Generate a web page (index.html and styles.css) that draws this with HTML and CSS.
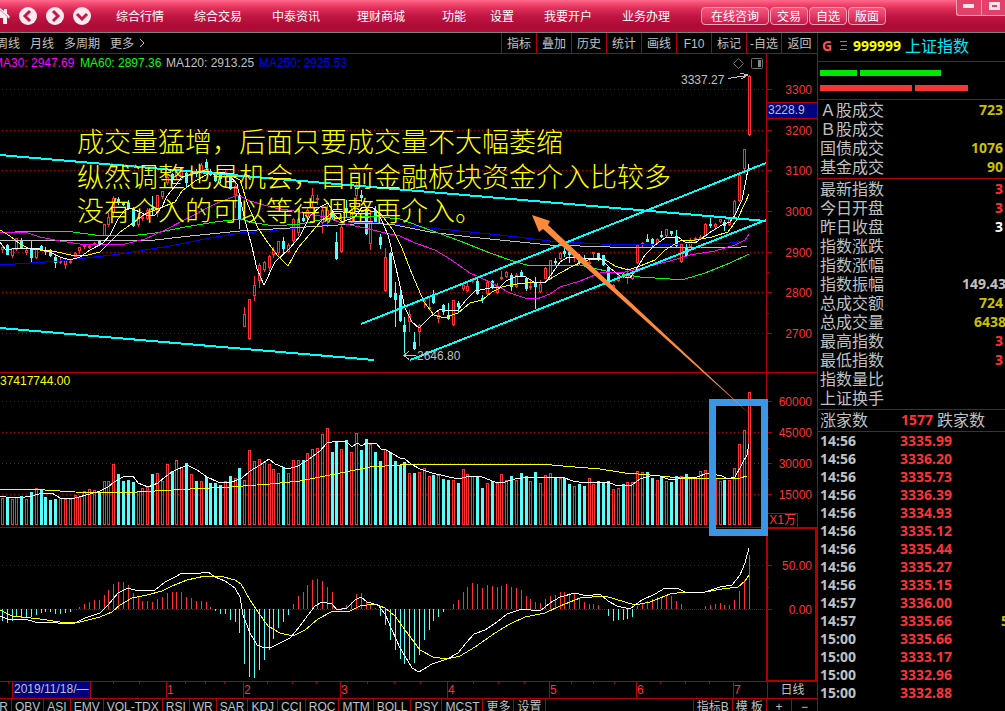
FILE: index.html
```html
<!DOCTYPE html>
<html lang="zh-CN">
<head>
<meta charset="utf-8">
<title>上证指数 999999</title>
<link rel="stylesheet" href="styles.css">
</head>
<body>
<div class="app">
  <header class="topbar">
    <nav class="round-nav">
      <button class="icon-btn home" aria-label="首页"><svg viewBox="0 0 20 20"><path d="M0 9.500 9 2l4 3V3h3v4.500l3 3-1.500 2L16 11v7h-4v-6H7v6H2v-7l-2 1z" fill="#ffeef2"/><path d="m1 10.500 8-6.500 8 7" fill="none" stroke="#f58aa4"/></svg></button>
      <button class="icon-btn" aria-label="后退"><svg viewBox="0 0 20 20"><circle cx="10" cy="10" r="9" fill="#ffe9ee"/><path d="M12 5 7 10l5 5" class="chev"/></svg></button>
      <button class="icon-btn" aria-label="前进"><svg viewBox="0 0 20 20"><circle cx="10" cy="10" r="9" fill="#ffe9ee"/><path d="m8 5 5 5-5 5" class="chev"/></svg></button>
      <button class="icon-btn" aria-label="展开"><svg viewBox="0 0 20 20"><circle cx="10" cy="10" r="9" fill="#ffe9ee"/><path d="m5 8 5 5 5-5" class="chev"/></svg></button>
    </nav>
    <nav class="menu">
      <a href="#">综合行情</a><a href="#">综合交易</a><a href="#">中泰资讯</a><a href="#" class="wide">理财商城</a><a href="#" class="wide">功能</a><a href="#" class="tight">设置</a><a href="#">我要开户</a><a href="#">业务办理</a>
    </nav>
    <div class="actions">
      <button class="long">在线咨询</button><button>交易</button><button>自选</button><button>版面</button>
    </div>
    <div class="window-controls">
      <button aria-label="最小化"><svg viewBox="0 0 24 15"><rect x="6" y="4" width="11" height="4" fill="#ffe4ea"/></svg></button>
      <button aria-label="最大化"><svg viewBox="0 0 24 15"><rect x="8.500" y="3.500" width="8" height="5" fill="none" stroke="#ffe4ea" stroke-width="3"/></svg></button>
    </div>
  </header>

  <main class="workspace">
    <section class="left">
      <div class="toolbar">
        <div class="periods"><button>周线</button><button>月线</button><button>多周期</button><button>更多<svg class="more" viewBox="0 0 6 10"><path d="m1 1 4 4-4 4"/></svg></button></div>
        <div class="tools"><button>指标</button><button>叠加</button><button>历史</button><button>统计</button><button>画线</button><button>F10</button><button>标记</button><button>-自选</button><button>返回</button></div>
      </div>
      <svg class="chart" id="chart" viewBox="0 54 817 627" role="img" aria-label="上证指数日线图">
        <g class="grid">
          <path d="M2 89.500H766M2 130.500H766M2 170.500H766M2 211.500H766M2 252.500H766M2 292.500H766M2 333.500H766M2 401.500H766M2 432.500H766M2 463.500H766M2 494.500H766M2 565.500H766"/>
          <path class="zero" d="M0 609.500H766"/>
        </g>
        <g class="frame">
          <path d="M766.500 54V528M0 372.500H817M0 527.500H766M767 513.500H797.500V527"/>
          <path d="M767 89.500h5M767 130.500h5M767 170.500h5M767 211.500h5M767 252.500h5M767 292.500h5M767 333.500h5M767 401.500h5M767 432.500h5M767 463.500h5M767 494.500h5M767 565.500h5M767 609.500h5M767 150.500h2M767 191.500h2M767 231.500h2M767 272.500h2M767 313.500h2M767 417.500h2M767 448.500h2M767 479.500h2M767 587.500h2"/>
          <rect class="thick" x="767" y="528" width="49" height="153"/>
        </g>
        <g id="candles"></g>
        <g id="volumes"></g>
        <g id="macd"></g>
        <g class="curves">
          <polyline class="blue" points="0,265 60,261 120,254 170,246 210,238 240,233 270,231 330,224 375,222 420,227 470,232 500,235 550,241 600,244 660,245 700,243 730,243 747,241"/>
          <polyline class="gray" points="0,240 60,240 155,240 190,236 240,231 290,228 370,223 395,225 430,232 470,237 500,240 550,245 610,247 700,247 735,248 747,246"/>
          <polyline class="green" points="0,233 30,231 65,231 95,235 130,236 155,233 185,227 215,222 240,219 255,223 275,226 300,224 330,218 370,216 400,219 430,230 460,241 490,253 510,260 530,266 580,265 610,272 640,277 670,279 685,279 705,273 730,263 749,254"/>
          <polyline class="magenta" points="0,232 25,232 40,237 60,241 80,244 100,245 125,244 145,239 165,230 190,217 215,204 238,195 250,201 275,208 300,212 325,217 345,224 365,228 385,233 400,236 415,243 435,250 450,259 470,273 490,282 510,293 525,298 537,299 550,294 560,287 580,281 600,273 625,272 650,266 670,261 690,255 715,251 735,245 745,240 749,234"/>
          <polyline class="yellow" points="0,230 10,236 20,244 30,249 40,250 52,251 62,253 75,256 88,255 100,252 112,240 120,232 130,225 145,214 160,208 175,202 182,191 195,181 210,173 220,172 232,176 240,180 248,205 258,228 268,243 278,256 288,266 298,248 310,234 322,220 335,211 350,213 365,210 380,213 393,230 402,248 412,274 424,302 434,315 444,318 458,313 470,303 482,300 492,292 502,287 510,285 525,283 545,282 560,273 575,265 588,260 604,259 615,266 628,270 640,266 655,260 665,250 680,241 695,240 712,237 728,232 738,218 745,203 749,194"/>
          <polyline class="white" points="0,242 5,249 12,249 20,248 30,248 40,249 50,252 60,257 70,260 80,257 90,250 103,243 110,235 118,219 125,210 130,208 140,212 148,216 155,215 162,207 167,196 175,186 182,177 192,174 200,171 207,171 215,175 223,172 230,176 237,184 242,207 247,228 252,247 257,269 264,285 275,262 290,248 300,236 310,216 320,207 328,203 335,215 342,222 355,217 362,207 372,207 378,212 388,235 396,268 405,308 412,322 419,328 430,317 440,309 448,311 458,310 466,300 475,291 490,288 500,287 506,281 515,277 524,276 534,282 545,283 551,275 560,262 568,257 580,258 600,258 610,268 620,276 630,278 636,270 645,255 655,245 665,238 678,237 685,242 695,243 705,236 712,231 722,225 730,222 735,215 742,200 746,180 749,164"/>
          <polyline class="yellow" points="0,489 45,490 75,492 120,493 155,491 190,489 230,487 270,484 300,481 330,475 370,467 400,465 430,464 540,464 575,467 600,469 625,473 650,475 680,478 740,478 747,476"/>
          <polyline class="white" points="0,496 12,498 25,497 32,496 42,493 52,493 60,498 66,499 75,498 90,494 100,491 108,487 114,482 123,477 133,476 138,483 148,487 158,483 165,477 172,472 187,465 197,470 207,477 218,482 232,482 242,478 250,471 260,465 269,459 275,464 288,469 298,466 308,460 320,451 327,443 337,441 347,442 352,447 357,443 362,446 366,443 376,443 381,449 386,450 400,458 404,458 411,464 420,469 432,473 445,476 458,479 470,476 482,477 495,482 505,482 515,479 530,477 562,477 573,481 585,483 608,482 615,485 632,485 640,479 650,476 657,475 668,479 678,479 685,477 697,477 708,473 722,476 728,479 735,477 742,464 747,455 749,444"/>
          <polyline class="yellow" points="0,610 12,616 40,619 60,622 80,622 100,617 112,612 120,605 132,598 147,595 162,591 172,586 187,580 205,576 220,576 235,580 241,584 250,600 258,612 268,626 280,633 293,636 305,630 318,619 333,611 350,611 360,606 375,604 385,608 395,616 405,630 420,650 433,657 447,659 460,656 475,647 495,633 510,624 525,617 545,613 560,606 580,598 605,596 615,599 635,605 650,602 670,594 685,592 705,592 722,589 738,587 745,581 749,575"/>
          <polyline class="white" points="0,616 10,620 25,619 35,622 50,622 65,624 75,623 85,618 100,613 108,605 118,593 128,588 138,591 155,590 165,582 175,577 182,573 195,574 208,572 215,577 225,581 235,588 240,597 243,615 250,633 257,645 265,648 272,647 280,643 290,638 300,626 308,615 315,606 322,602 332,604 337,610 347,608 355,600 361,597 367,602 378,605 385,614 392,630 400,648 405,656 412,668 419,672 432,664 447,659 458,653 466,643 474,634 485,630 497,622 507,614 522,609 540,611 550,603 560,597 575,593 587,596 600,594 608,601 617,606 630,609 642,600 655,594 665,588 677,588 687,593 705,592 720,587 732,585 740,575 745,563 749,548"/>
        </g>
        <path class="trend" d="M0 155 766 221M361 324 766 163M410 360 766 220M0 328 374 360"/>
        <g class="axis-text">
          <text x="812" y="94">3300</text><text x="812" y="135">3200</text><text x="812" y="175">3100</text><text x="812" y="216">3000</text><text x="812" y="257">2900</text><text x="812" y="297">2800</text><text x="812" y="338">2700</text>
          <text x="812" y="406">60000</text><text x="812" y="437">45000</text><text x="812" y="468">30000</text><text x="812" y="499">15000</text>
          <text x="796" y="524">X1万</text>
          <text x="812" y="570">50.00</text><text x="812" y="614">0.00</text>
        </g>
        <rect class="last-box" x="767" y="102" width="50" height="16"/>
        <path class="last-line" d="M767 102.500H817M767 118.500H817"/>
        <text class="label last" x="768" y="114">3228.9</text>
        <text class="label c-magenta" x="-7" y="67">MA30: 2947.69</text>
        <text class="label c-green" x="80" y="67">MA60: 2897.36</text>
        <text class="label" x="166" y="67">MA120: 2913.25</text>
        <text class="label c-blue" x="259" y="67">MA250: 2925.53</text>
        <text class="label c-yellow" x="0" y="385">37417744.00</text>
        <text class="label" x="681" y="84">3337.27</text>
        <text class="label" x="417" y="360">2646.80</text>
        <path class="pointer" d="M728 78.500 747 75.500M740 73l8 2-7 4M416 355.500H405M409 351l-5 4.500 5 4"/>
        <path class="tool-icon" d="m738.500 58.500 5 5-5 5-5-5zM751.500 59.500a1 1 0 0 1 1-1h9a1 1 0 0 1 1 1v8a1 1 0 0 1-1 1h-9a1 1 0 0 1-1-1z"/>
        <path class="tool-fill" d="M758 60h3v7h-3z"/>
        <g class="note">
          <text x="77" y="152">成交量猛增，后面只要成交量不大幅萎缩</text>
          <text x="77" y="187">纵然调整也是机会，目前金融板块资金介入比较多</text>
          <text x="77" y="221">没有介入的可以等待调整再介入。</text>
        </g>
        <rect class="highlight" x="712.500" y="402.500" width="52" height="130"/>
        <polygon class="arrow" points="532,215 550,221 548,225 753,417 543,229 539,232"/>
      </svg>
      <div class="date-row">
        <svg class="dates" viewBox="0 681 767 17">
          <path class="date-lines" d="M0 681.500H767M12.500 682V698M90.500 682V698M166.500 682V698M243.500 682V698M340.500 682V698M447.500 682V698M549.500 682V698M636.500 682V698M733.500 682V698M8.500 682v2M113.500 682v2M139.500 682v2M185.500 682v2M205.500 682v2M224.500 682v2M267.500 682v2M292.500 682v2M316.500 682v2M367.500 682v2M394.500 682v2M420.500 682v2M473.500 682v2M498.500 682v2M524.500 682v2M571.500 682v2M593.500 682v2M614.500 682v2M660.500 682v2M685.500 682v2M709.500 682v2"/>
          <rect x="13" y="682" width="77" height="16" fill="#000080"/>
          <text class="label" x="14" y="693">2019/11/18/—</text>
          <g class="months"><text x="167" y="694">1</text><text x="244" y="694">2</text><text x="341" y="694">3</text><text x="448" y="694">4</text><text x="550" y="694">5</text><text x="637" y="694">6</text><text x="734" y="694">7</text></g>
        </svg>
        <button class="cycle">日线</button>
      </div>
      <div class="indicator-row">
        <div class="indicators"><button class="clipped">AR</button><button>OBV</button><button>ASI</button><button>EMV</button><button>VOL-TDX</button><button>RSI</button><button>WR</button><button>SAR</button><button>KDJ</button><button>CCI</button><button>ROC</button><button>MTM</button><button>BOLL</button><button>PSY</button><button>MCST</button><button>更多</button><button>设置</button></div>
        <div class="templates"><button>指标B</button><button>模 板</button><button class="zoom">+</button><button class="zoom">−</button></div>
      </div>
    </section>

    <aside class="quote">
      <div class="title"><span class="g">G</span><svg class="lines" viewBox="0 0 8 10"><path d="M0 .5H7M1 4.500H7" stroke="#ff5050"/><path d="M0 8.500H7" stroke="#00e600"/></svg><b class="code">999999</b><span class="name">上证指数</span></div>
      <div class="meters">
        <div class="meter up"><i style="width:37px"></i><i style="width:81px"></i></div>
        <div class="meter down"><i style="width:92px"></i><i style="width:53px"></i></div>
      </div>
      <dl>
        <div><dt>Ａ股成交</dt><dd>723</dd></div>
        <div><dt>Ｂ股成交</dt><dd></dd></div>
        <div><dt>国债成交</dt><dd>1076</dd></div>
        <div><dt>基金成交</dt><dd>90</dd></div>
      </dl>
      <dl>
        <div><dt>最新指数</dt><dd class="red">3</dd></div>
        <div><dt>今日开盘</dt><dd class="red">3</dd></div>
        <div><dt>昨日收盘</dt><dd class="bright">3</dd></div>
        <div><dt>指数涨跌</dt><dd></dd></div>
        <div><dt>指数涨幅</dt><dd></dd></div>
        <div><dt>指数振幅</dt><dd class="plain cut">149.43</dd></div>
        <div><dt>总成交额</dt><dd>724</dd></div>
        <div><dt>总成交量</dt><dd class="cut">6438</dd></div>
        <div><dt>最高指数</dt><dd class="red">3</dd></div>
        <div><dt>最低指数</dt><dd class="red">3</dd></div>
        <div><dt>指数量比</dt><dd></dd></div>
        <div><dt>上证换手</dt><dd></dd></div>
      </dl>
      <div class="breadth"><span>涨家数</span><b>1577</b><span>跌家数</span></div>
      <table class="ticks">
        <tbody>
          <tr><td>14:56</td><td>3335.99</td><td></td></tr>
          <tr><td>14:56</td><td>3336.20</td><td></td></tr>
          <tr><td>14:56</td><td>3335.73</td><td></td></tr>
          <tr><td>14:56</td><td>3336.39</td><td></td></tr>
          <tr><td>14:56</td><td>3334.93</td><td></td></tr>
          <tr><td>14:56</td><td>3335.12</td><td></td></tr>
          <tr><td>14:56</td><td>3335.44</td><td></td></tr>
          <tr><td>14:56</td><td>3335.27</td><td></td></tr>
          <tr><td>14:56</td><td>3335.15</td><td></td></tr>
          <tr><td>14:57</td><td>3336.00</td><td></td></tr>
          <tr><td>14:57</td><td>3335.66</td><td>5</td></tr>
          <tr><td>15:00</td><td>3335.66</td><td></td></tr>
          <tr><td>15:00</td><td>3333.17</td><td></td></tr>
          <tr><td>15:00</td><td>3332.96</td><td></td></tr>
          <tr><td>15:00</td><td>3332.88</td><td></td></tr>
        </tbody>
      </table>
    </aside>
  </main>
</div>
<script src="chart.js"></script>
</body>
</html>
```
FILE: styles.css
```css
* { box-sizing: border-box; }
body {
  margin: 0;
  background: #000;
  color: #c0c0c0;
  font: 12px/16px "Liberation Sans", "Noto Sans CJK SC", sans-serif;
}
button { padding: 0; border: 0; background: none; color: inherit; font: inherit; white-space: nowrap; }
a { color: inherit; text-decoration: none; }
.app { display: flex; flex-direction: column; height: 100vh; overflow: hidden; }

/* title bar */
.topbar {
  display: flex;
  flex: none;
  height: 33px;
  border-bottom: 1px solid #808080;
  background: linear-gradient(#ff6a8c 0, #f4486f 4px, #dc2c58 9px, #c01744 16px, #ac0b35 26px, #b40c3a 32px);
  color: #fff;
}
.round-nav { display: flex; flex: none; align-items: center; gap: 7px; width: 117px; margin-left: -9px; }
.icon-btn { width: 20px; height: 20px; }
.icon-btn svg { display: block; width: 20px; height: 20px; }
.chev { fill: none; stroke: #c01848; stroke-width: 3; }
.menu { display: flex; flex: 1; align-items: center; gap: 30px; padding: 1px 0 0 8px; white-space: nowrap; }
.menu .wide { margin-left: 7px; }
.menu .tight { margin-left: -6px; }
.actions { display: flex; flex: none; gap: 1px; padding-top: 7px; margin-right: 70px; }
.actions button {
  width: 38px;
  height: 18px;
  border: 1px solid #ffa0b6;
  border-radius: 4px;
  background: linear-gradient(#f4577b, #e63a66 50%, #c41a4a);
  line-height: 18px;
}
.actions .long { width: 68px; }
.window-controls { display: flex; flex: none; width: 49px; height: 16px; border: solid #ff9db3; border-width: 0 0 1px 1px; border-radius: 0 0 0 3px; background: #e2426a; }
.window-controls button { flex: 1; }
.window-controls button + button { border-left: 1px solid #ff9db3; }
.window-controls svg { display: block; width: 24px; height: 15px; }

.workspace { display: grid; grid-template-columns: minmax(0, 1fr) 188px; flex: 1; min-height: 0; }
.left { min-width: 0; }

/* period and tool buttons */
.toolbar { display: flex; justify-content: space-between; height: 21px; border-bottom: 1px solid #b00000; }
.periods { display: flex; gap: 10px; margin-left: -4px; }
.periods button, .tools button { padding-top: 1px; }
.more { width: 6px; height: 10px; margin-left: 5px; fill: none; stroke: #c0c0c0; }
.tools { display: flex; }
.tools button { width: 35px; border-left: 1px solid #b00000; }
.tools button:last-child { width: 36px; }

/* chart */
.chart, .dates { display: block; width: 100%; height: auto; }
.chart path, .chart rect, .chart polyline, .dates path { fill: none; shape-rendering: crispEdges; }
.grid { stroke: #b00000; stroke-dasharray: 1 3; }
.grid .zero { stroke-dasharray: 1 1; }
.frame, .date-lines { stroke: #b00000; }
.chart .thick { stroke-width: 2; }
.chart .rise { stroke: #ff3232; }
.chart .fall { stroke: #54ffff; }
.chart rect.fall { fill: #54ffff; }
.curves .blue { stroke: #00f; }
.curves .gray { stroke: #c0c0c0; }
.curves .green { stroke: #0f0; }
.curves .magenta { stroke: #f0f; }
.curves .yellow { stroke: #ff0; }
.curves .white { stroke: #fff; }
.chart .trend { stroke: #0ff; stroke-width: 2; }
.axis-text { fill: #ff3232; text-anchor: end; }
.months { fill: #ff3232; }
.label { fill: #c0c0c0; }
.c-magenta { fill: #f0f; }
.c-green { fill: #0f0; }
.c-blue { fill: #00f; }
.c-yellow { fill: #ff0; }
.chart .last-box { fill: #000080; }
.last-line { stroke: #b00000; }
.chart .pointer { stroke: #c0c0c0; }
.chart .tool-icon { stroke: #707070; shape-rendering: auto; }
.chart .tool-fill { fill: #888; }
.note { fill: #ff0; font: 300 27px "Noto Sans CJK SC", sans-serif; }
.chart .highlight { stroke: #3a96e6; stroke-width: 7; }
.arrow { fill: #ff8a3c; }

.date-row { display: flex; }
.dates { flex: 1; min-width: 0; }
.cycle { width: 50px; border-top: 1px solid #b00000; border-left: 1px solid #b00000; }
.indicator-row { display: flex; justify-content: space-between; height: 17px; border-top: 1px solid #b00000; line-height: 14px; }
.indicators, .templates { display: flex; }
.indicator-row button { padding: 0 3px; border-right: 1px solid #b00000; }
.indicator-row .clipped { width: 12px; padding: 0 3px 0 0; direction: rtl; overflow: hidden; }
.templates { border-left: 1px solid #b00000; }
.templates button:last-child { border-right: 0; }
.indicator-row .zoom { width: 25px; }

/* quote panel */
.quote { overflow: hidden; border-left: 1px solid #b00000; font-size: 16px; line-height: 19px; white-space: nowrap; }
.title { display: flex; align-items: center; height: 29px; padding: 0 0 2px 4px; border-bottom: 1px solid #b00000; }
.g, .code, dd, .breadth b, .ticks { font: bold 14px/18px "Noto Sans", sans-serif; }
.g { width: 18px; color: #ff5050; }
.lines { width: 8px; height: 10px; margin-right: 5px; }
.code { color: #ff0; }
.name { margin-left: 4px; color: #00e5ff; }
.meters { display: grid; gap: 9px; height: 38px; padding: 8px 2px; border-bottom: 1px solid #b00000; }
.meter { display: flex; gap: 3px; height: 6px; }
.up i { background: #00e600; }
.down i { background: #ff3232; }
dl { margin: 0; padding: 1px 2px; border-bottom: 1px solid #b00000; }
dl div { display: flex; justify-content: space-between; height: 19px; }
dd { margin: 0; color: #c8c000; }
dd.cut { margin-right: -3px; }
.red { color: #ff3232; }
.bright { color: #fff; }
.plain { color: #c0c0c0; }
.breadth { display: flex; height: 22px; padding: 1px 2px; border-bottom: 1px solid #b00000; }
.breadth b { margin: 0 4px 0 33px; color: #ff3232; }
.ticks { width: 200px; border-spacing: 0; table-layout: fixed; }
.ticks td { height: 18px; padding: 0 0 0 2px; }
.ticks td:first-child { width: 80px; }
.ticks td:nth-child(2) { width: 101px; color: #ff3232; }
.ticks td:nth-child(3) { color: #c8c000; }
```
FILE: chart.js
```js
const NS = "http://www.w3.org/2000/svg";
const xAt = i => Math.floor(2.3 + 4.85 * i) + 0.5;

function add(parent, name, attrs) {
  const node = document.createElementNS(NS, name);
  for (const key in attrs) node.setAttribute(key, attrs[key]);
  parent.appendChild(node);
}

// r = rising session, c = falling; bar top in thirds of a unit below 370
const volume = `r385 c380 r388 r382 c378 r388 c366 r355 c357 c381 c390 c387 r384 r388 r388 r376 r382 r364 r358 r361 c370 r334 r334 r283 c312 c333 c330 c336 r364 r355 r352 c312 r310 r332 r283 c303 r271 r292 c279 r313 c333 r334 c321 c339 c339 c345 r334 c318 r325 c294 r331 r241 r274 r268 r277 r283 r298 r310 c291 r310 r271 r271 c270 r250 r238 r235 r193 r175 c246 c213 r238 c210 r247 r190 c240 c207 r223 c246 c273 r238 c246 c273 c285 c276 r310 c309 r307 r295 r319 c315 r316 c327 c330 r331 c339 r298 r313 r319 c321 c354 r340 c333 r340 r313 r331 c318 r331 c309 c318 r334 c306 r340 r316 r310 c324 r325 c324 c342 r349 c342 c348 r325 r343 c333 c339 c333 r358 r355 c342 r337 r337 r304 r307 c306 c324 r331 c318 r334 c336 c318 r319 c312 r325 r320 r304 r301 c310 r325 r334 c330 r331 r295 r223 r181 r67`.split(/\s+/);

// high, body top, body bottom, low, in thirds of a unit below 130
const price = `345 352 360 368|342 345 375 375|355 355 378 383|325 325 360 362|325 332 355 358|355 360 368 375|332 357 384 397|355 358 383 387|345 347 360 362|350 360 364 375|358 362 377 380|375 382 398 413|385 392 400 402|385 390 404 416|388 392 396 402|366 368 380 382|350 352 364 372|343 345 352 357|343 347 350 357|335 338 341 343|332 333 345 347|283 283 318 318|250 262 286 292|198 205 250 260|202 208 216 225|215 219 225 228|210 219 235 240|232 236 287 290|250 260 285 290|255 262 268 272|235 240 268 270|198 235 238 255|196 196 248 262|183 184 200 207|135 140 160 165|128 133 148 160|118 124 138 150|112 112 138 140|124 130 160 170|115 124 138 150|118 124 132 140|100 104 130 133|87 96 115 120|118 122 134 138|125 130 152 156|128 133 148 158|120 127 140 150|130 140 178 180|160 167 195 233|190 195 268 297|530 552 590 592|508 508 628 630|437 465 497 513|398 405 452 475|393 396 420 425|375 377 415 422|350 360 375 385|333 334 370 375|322 334 357 368|338 345 367 368|265 266 332 338|262 268 310 318|250 265 272 275|235 240 262 270|175 196 215 230|195 205 210 225|225 240 280 310|225 240 262 290|240 245 262 270|305 335 388 390|255 290 367 370|210 235 250 260|230 240 275 280|158 175 198 225|180 196 205 215|230 242 312 315|245 275 343 360|228 240 275 280|312 320 345 357|355 382 482 485|365 370 500 503|455 490 510 590|470 495 572 575|560 585 605 670|540 553 577 605|605 635 657 660|582 584 607 648|508 511 515 535|500 530 536 540|480 498 520 522|540 555 566 580|522 525 545 555|520 555 568 570|510 511 586 588|512 518 532 545|462 464 478 482|460 468 482 485|445 447 455 460|445 452 492 495|495 503 507 518|450 455 492 498|450 453 472 478|460 468 490 492|423 440 446 450|423 425 440 445|430 436 470 482|430 434 470 475|420 426 438 442|440 445 478 482|450 468 472 480|440 460 472 537|450 462 487 488|412 415 447 448|390 391 447 450|385 393 398 405|365 370 388 390|350 363 373 382|355 366 374 398|372 378 385 395|372 378 398 402|375 388 395 402|390 396 402 405|366 367 371 383|368 370 388 392|374 376 405 408|408 412 455 458|463 465 475 480|430 438 454 457|425 432 440 444|415 428 444 462|425 435 446 449|345 346 400 402|335 340 346 350|312 326 335 336|325 328 342 350|325 328 338 345|303 316 319 323|297 298 318 320|303 303 312 318|300 318 347 350|340 343 395 398|340 355 378 380|325 330 350 354|320 324 326 340|316 320 328 330|280 283 318 320|264 282 285 295|280 281 292 300|266 268 276 280|270 276 288 303|260 266 286 288|210 212 256 262|135 135 213 215|57 58 118 120|-164 -162 16 17`.split("|");

// histogram ends in thirds of a unit below 530; 238 is the zero line
const macd = [272,278,272,260,262,260,262,255,248,246,246,251,251,248,245,238,231,222,216,210,210,195,180,162,156,156,165,189,200,213,213,216,207,201,189,186,186,186,201,204,213,213,216,231,242,251,251,269,276,308,402,440,443,419,389,359,326,294,276,255,222,198,186,165,150,147,153,171,186,235,234,225,216,192,189,216,222,234,258,285,329,360,387,402,389,399,374,329,300,272,261,245,238,222,210,186,171,159,162,174,165,168,171,168,162,171,174,180,198,207,216,219,207,198,195,186,186,189,192,204,216,222,222,225,236,257,272,269,269,266,260,228,219,213,207,201,201,195,198,213,222,238,238,238,238,228,225,222,219,225,225,210,183,150,75];

const candleLayer = document.getElementById("candles");
const volumeLayer = document.getElementById("volumes");
const macdLayer = document.getElementById("macd");

volume.forEach((item, i) => {
  const x = xAt(i);
  const cls = item[0] === "r" ? "rise" : "fall";
  const top = Math.round(370 + Number(item.slice(1)) / 3) + 0.5;
  add(volumeLayer, "rect", { class: cls, x: x - 1, y: top, width: 2, height: 524.5 - top });

  const [high, open, close, low] = price[i].split(" ").map(v => Math.round(130 + v / 3));
  add(candleLayer, "path", { class: cls, d: `M${x} ${high}V${open}M${x} ${close}V${low}` });
  add(candleLayer, "rect", { class: cls, x: x - 1, y: open + 0.5, width: 2, height: Math.max(1, close - open - 1) });

  const end = Math.round(530 + macd[i] / 3);
  if (macd[i] !== 238) {
    add(macdLayer, "path", { class: macd[i] < 238 ? "rise" : "fall", d: `M${x} 609V${end}` });
  }
});
```
